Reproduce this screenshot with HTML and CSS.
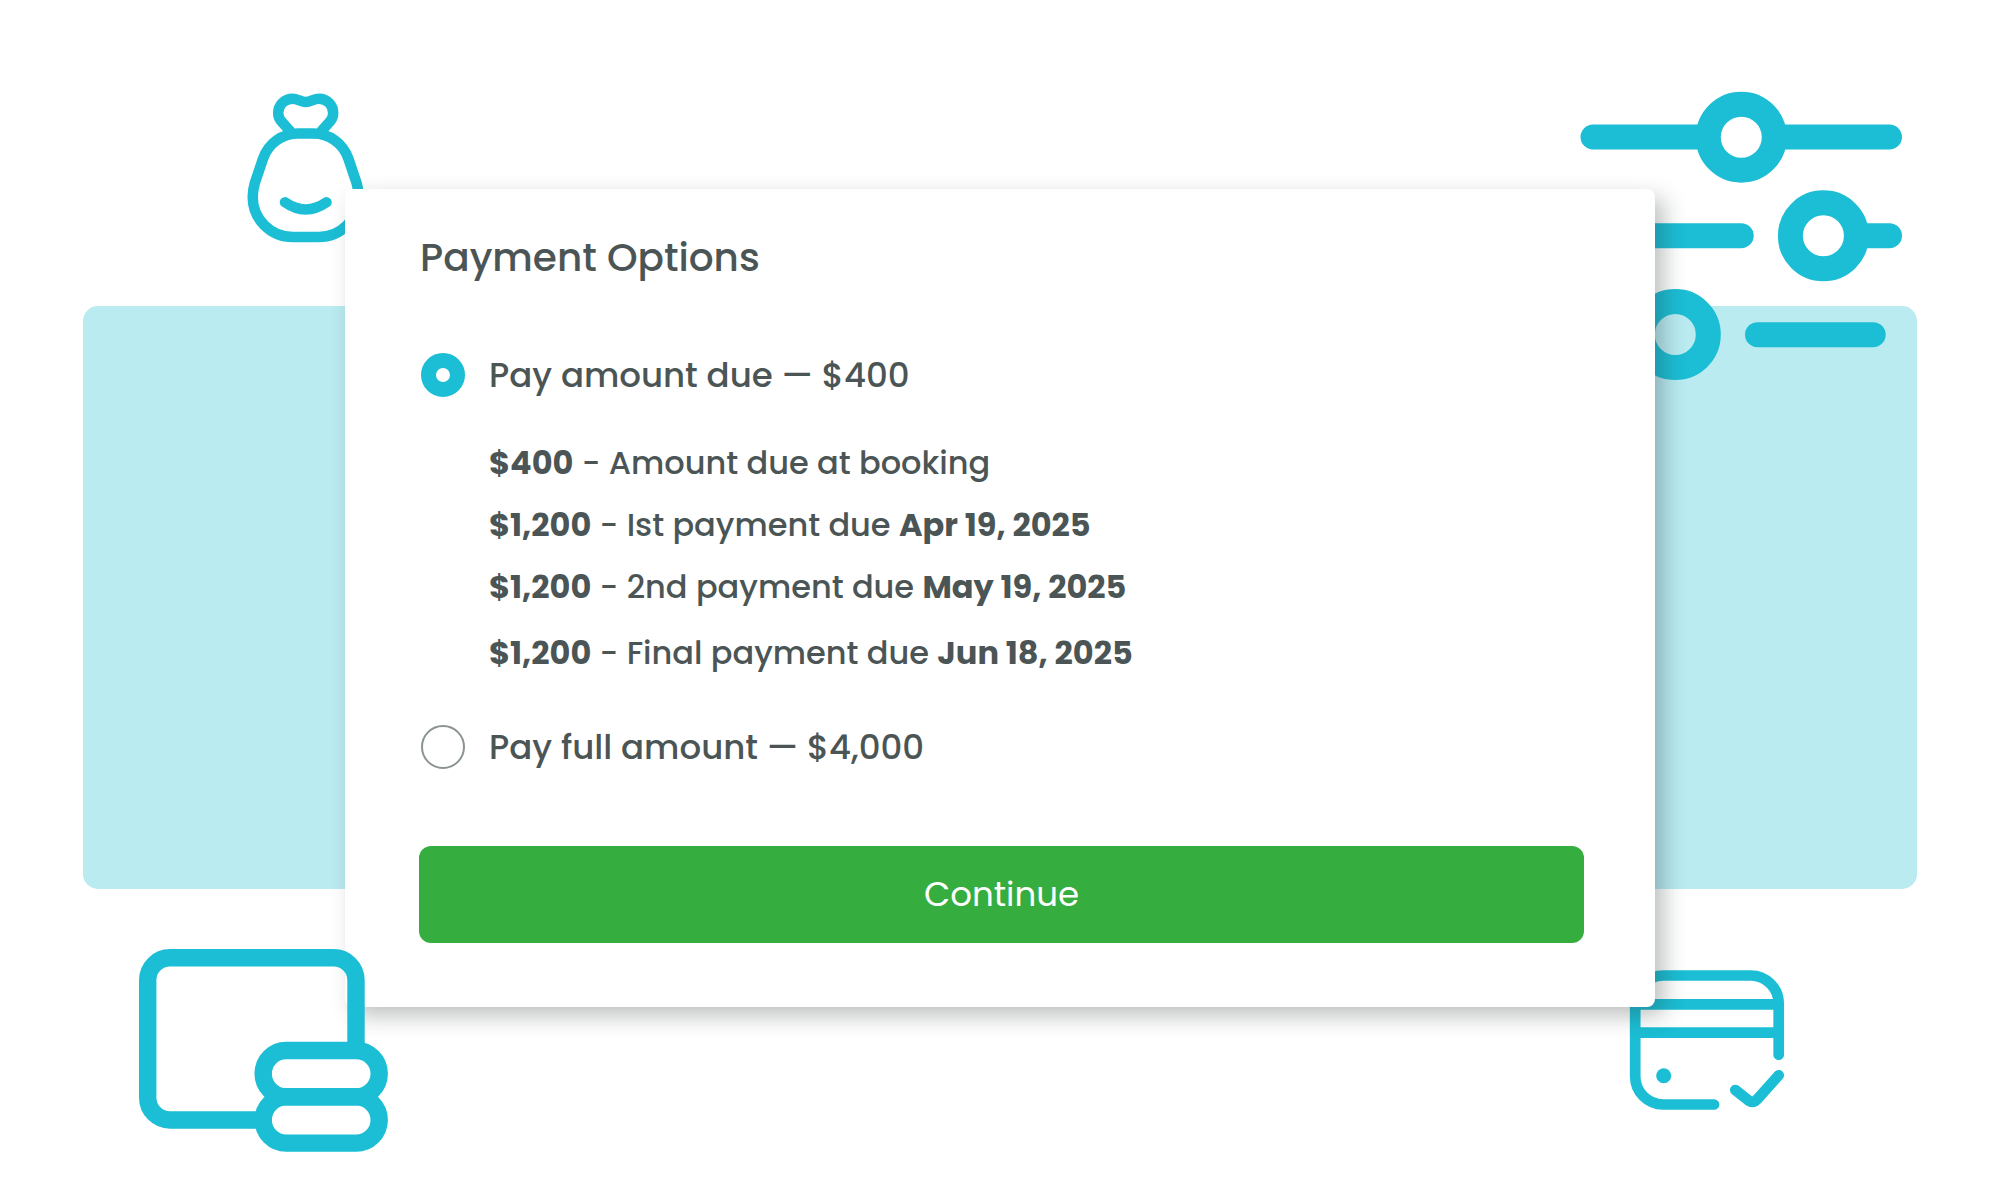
FILE: index.html
```
<!DOCTYPE html>
<html lang="en">
<head>
    <meta charset="UTF-8">
    <meta name="viewport" content="width=device-width, initial-scale=1.0">
    <title>Payment Options</title>
    <link rel="stylesheet" href="styles.css">
</head>
<body>
    <main class="scene">
        <div class="backdrop"></div>

        <!-- Money bag -->
        <svg class="icon bag" viewBox="0 0 180 190" stroke-width="10.5" aria-hidden="true">
            <path d="M78 63.5H93.4C109 63.5 123 73 128.5 89L136.6 113C138 118 138.7 122 138.7 127C138.7 149 121 167 98.7 167H72.7C50.5 167 32.7 149 32.7 127C32.7 122 33.4 118 34.8 113L42.9 89C48.4 73 62.4 63.5 78 63.5Z"/>
            <path d="M70 61L62 52C59.5 49.5 58.2 46 58.2 43C58.2 35 64.5 28.7 72.5 28.7C77.5 28.7 81 32 85.7 32C90.4 32 94 28.7 99 28.7C107 28.7 113.2 35 113.2 43C113.2 46 112 49.5 109.5 52L101.5 61"/>
            <path d="M65 132.3Q85.7 146.7 106.5 132.3"/>
        </svg>

        <!-- Sliders -->
        <svg class="icon sliders" viewBox="0 0 380 330" stroke-width="25" aria-hidden="true">
            <path d="M33 67H145M217 67H329.5M33 165.7H181.2M300 165.7H329.5M197.5 264.7H313.2"/>
            <circle cx="181.3" cy="67.2" r="33"/>
            <circle cx="263.4" cy="165.8" r="33"/>
            <circle cx="115.3" cy="264.6" r="33"/>
        </svg>

        <!-- Credit card -->
        <svg class="icon credit" viewBox="0 0 210 190" stroke-width="10.7" aria-hidden="true">
            <path d="M114 165.5H63.2A28 28 0 0 1 35.2 137.5V64.5A28 28 0 0 1 63.2 36.5H150.7A28 28 0 0 1 178.7 64.5V115.7"/>
            <path d="M36 65.3H178M36 93.7H178"/>
            <path d="M135.3 151L148.5 161.5Q153 164.5 157 160.5L178.7 136.3"/>
            <circle class="dot" cx="63.7" cy="136.7" r="7.5"/>
        </svg>

        <form class="card">
            <h1>Payment Options</h1>

            <div class="option">
                <input type="radio" id="due" name="payment" checked>
                <label for="due">Pay amount due — $400</label>
            </div>
            <ul class="schedule">
                <li><b>$400</b> - Amount due at booking</li>
                <li><b>$1,200</b> - Ist payment due <b>Apr 19, 2025</b></li>
                <li><b>$1,200</b> - 2nd payment due <b>May 19, 2025</b></li>
                <li><b>$1,200</b> - Final payment due <b>Jun 18, 2025</b></li>
            </ul>
            <div class="option">
                <input type="radio" id="full" name="payment">
                <label for="full">Pay full amount — $4,000</label>
            </div>

            <button type="button">Continue</button>
        </form>

        <!-- Wallet with coins, sits on top of the card -->
        <svg class="icon wallet" viewBox="0 0 290 240" stroke-width="17.4" aria-hidden="true">
            <path stroke-linecap="butt" d="M145 191H50A22.3 22.3 0 0 1 27.7 168.7V51.1A22.3 22.3 0 0 1 50 28.8H213.7A22.3 22.3 0 0 1 236 51.1V120"/>
            <rect x="143.2" y="121.5" width="116" height="46.3" rx="23.1"/>
            <rect x="143.2" y="167.8" width="116" height="46.3" rx="23.1"/>
        </svg>
    </main>
</body>
</html>
```
FILE: styles.css
```
* {
    box-sizing: border-box;
}

body {
    margin: 0;
    background-color: #fff;
    color: #4b5555;
    font-family: Poppins, Inter, "Open Sans", sans-serif;
    font-weight: 500;
}

.scene {
    position: relative;
    padding: 189px 0;
    overflow: hidden;
}

.backdrop {
    position: absolute;
    top: 306px;
    left: 83px;
    right: 83px;
    height: 583px;
    border-radius: 15px;
    background-color: #b9ebf1;
}

/* Decorative icons */
.icon {
    position: absolute;
    fill: none;
    stroke: #1bbed4;
    stroke-linecap: round;
}

.icon .dot {
    fill: #1bbed4;
    stroke: none;
}

.bag {
    top: 70px;
    left: 11%;
    width: 180px;
}

.sliders {
    top: 70px;
    right: 3%;
    width: 380px;
}

.credit {
    top: 939px;
    left: 80%;
    width: 210px;
}

.wallet {
    top: 929px;
    left: 6%;
    width: 290px;
}

/* Card */
.card {
    position: relative;
    width: 1310px;
    max-width: 66%;
    margin: 0 auto;
    padding: 39px 71px 64px 74px;
    border-radius: 8px;
    background-color: #fff;
    box-shadow: 9px 9px 22px rgba(40, 50, 50, 0.3);
}

h1 {
    margin: 0 0 57px;
    padding-left: 1px;
    font-size: 39px;
    font-weight: 500;
    line-height: 60px;
}

.option {
    display: flex;
    align-items: center;
    gap: 24px;
    padding-left: 2px;
    font-size: 34px;
    line-height: 60px;
}

.option input {
    flex: none;
    width: 44px;
    height: 44px;
    margin: 0;
    appearance: none;
    border: 2px solid #8b9292;
    border-radius: 50%;
    background-color: #fff;
}

.option input:checked {
    border: 15px solid #1bbed4;
}

.schedule {
    margin: 27px 0 33px;
    padding-left: 70px;
    list-style: none;
    font-size: 32px;
    line-height: 62px;
}

.schedule li:last-child {
    padding-top: 4px;
}

.schedule b {
    font-weight: 700;
}

button {
    display: block;
    width: 100%;
    height: 97px;
    margin-top: 69px;
    border: 0;
    border-radius: 12px;
    background-color: #35ae3f;
    color: #fff;
    font-family: inherit;
    font-size: 34px;
    font-weight: 400;
}
```
